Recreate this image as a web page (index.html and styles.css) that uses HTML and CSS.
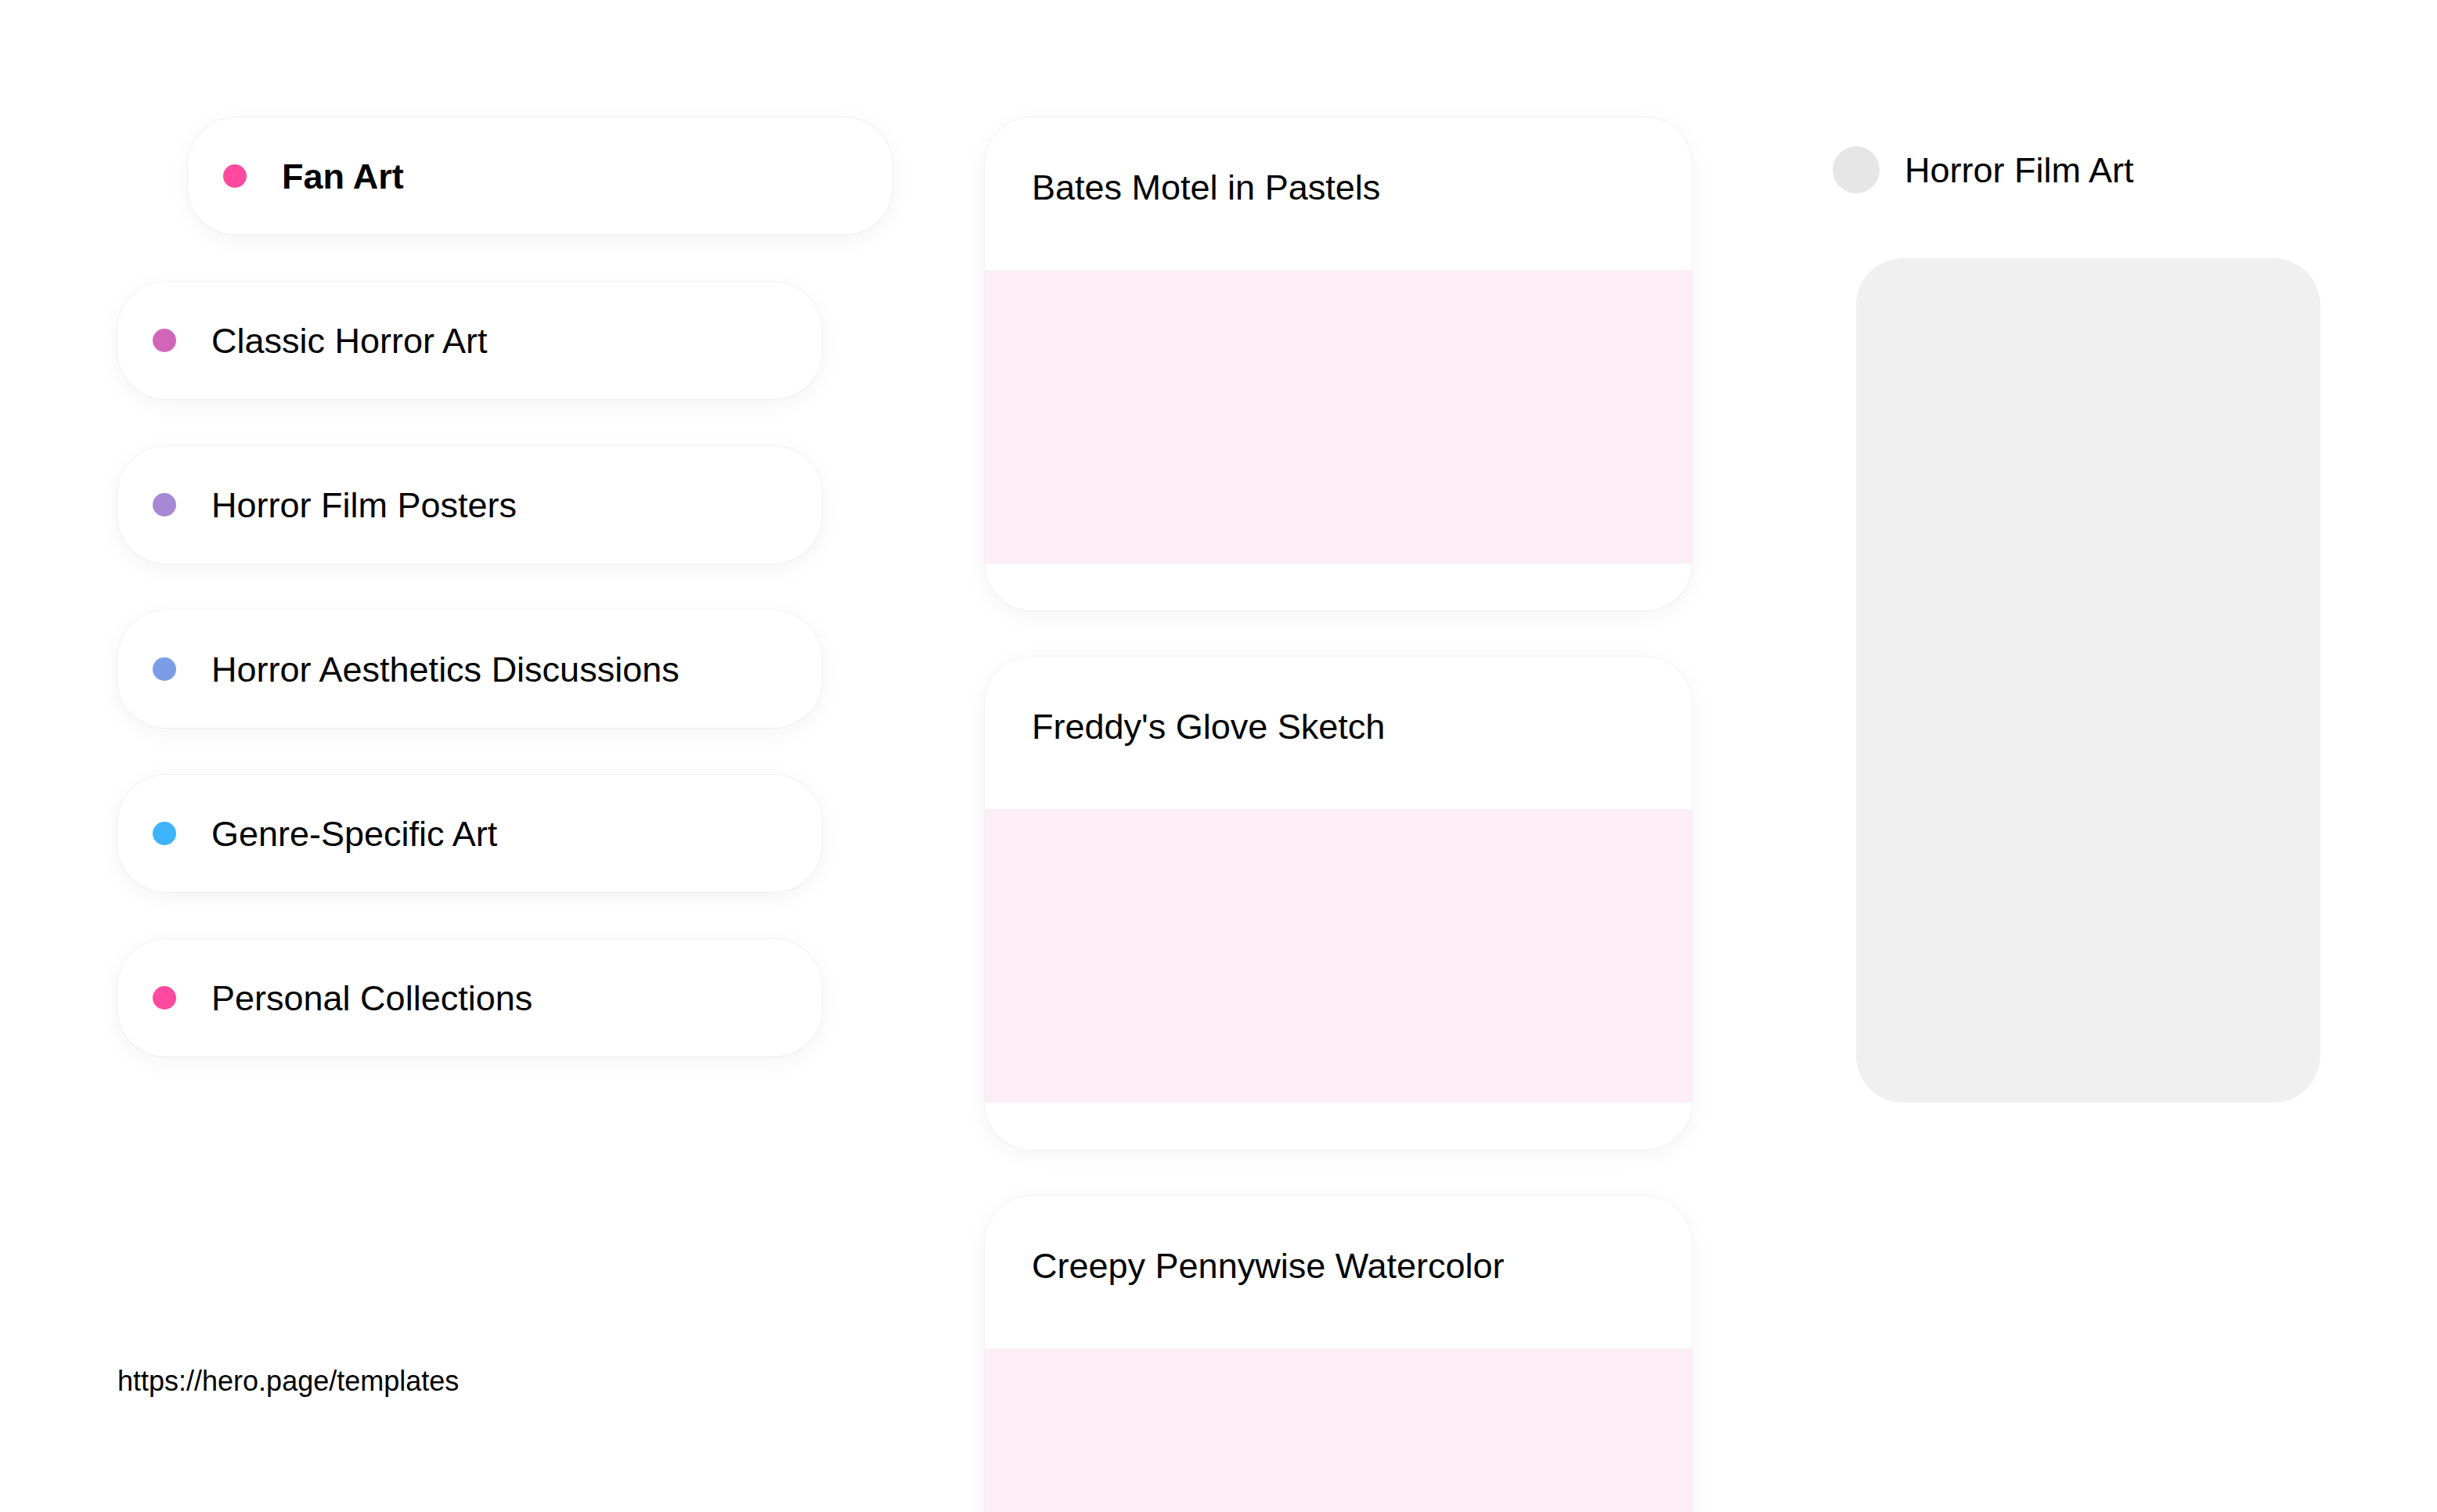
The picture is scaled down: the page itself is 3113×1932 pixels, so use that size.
FILE: index.html
```html
<!DOCTYPE html>
<html lang="en">
<head>
<meta charset="utf-8">
<title>Horror Film Art</title>
<link rel="stylesheet" href="styles.css">
</head>
<body>
<div class="app">
  <aside class="categories">
    <ul class="cat-list">
      <li class="cat active"><span class="dot dot-pink"></span><span class="cat-name">Fan Art</span></li>
      <li class="cat"><span class="dot dot-orchid"></span><span class="cat-name">Classic Horror Art</span></li>
      <li class="cat"><span class="dot dot-lavender"></span><span class="cat-name">Horror Film Posters</span></li>
      <li class="cat"><span class="dot dot-blue"></span><span class="cat-name">Horror Aesthetics Discussions</span></li>
      <li class="cat"><span class="dot dot-sky"></span><span class="cat-name">Genre-Specific Art</span></li>
      <li class="cat"><span class="dot dot-pink"></span><span class="cat-name">Personal Collections</span></li>
    </ul>
    <p class="source">https://hero.page/templates</p>
  </aside>

  <main class="feed">
    <article class="post">
      <h2 class="post-title">Bates Motel in Pastels</h2>
      <div class="post-image"></div>
    </article>
    <article class="post">
      <h2 class="post-title">Freddy's Glove Sketch</h2>
      <div class="post-image"></div>
    </article>
    <article class="post">
      <h2 class="post-title">Creepy Pennywise Watercolor</h2>
      <div class="post-image"></div>
    </article>
  </main>

  <section class="detail">
    <div class="detail-head">
      <span class="avatar"></span>
      <span class="detail-title">Horror Film Art</span>
    </div>
    <div class="detail-panel"></div>
  </section>
</div>
</body>
</html>
```

FILE: styles.css
```css
html, body {
  margin: 0;
  padding: 0;
  background: #ffffff;
}

body {
  font-family: "Liberation Sans", Arial, sans-serif;
  color: #000000;
}

.app {
  display: flex;
  align-items: flex-start;
  height: 100vh;
  overflow: hidden;
  padding: 150px 0 0 150px;
  box-sizing: border-box;
}

/* ---------- left column ---------- */
.categories {
  width: 900px;
  flex: none;
  margin-right: 208px;
}

.cat-list {
  list-style: none;
  margin: 0;
  padding: 0;
  display: flex;
  flex-direction: column;
  gap: 60px;
}

.cat {
  height: 150px;
  box-sizing: border-box;
  display: flex;
  align-items: center;
  gap: 45px;
  padding: 0 45px;
  background: #ffffff;
  border-radius: 62px;
  box-shadow: 0 0 0 1px rgba(0, 0, 0, 0.035), 0 6px 28px rgba(0, 0, 0, 0.05);
  font-size: 45px;
}

.cat.active {
  transform: translateX(90px);
  font-weight: 700;
}

.dot {
  width: 30px;
  height: 30px;
  border-radius: 50%;
  flex: none;
}

.dot-pink { background: #ff4a9f; }
.dot-orchid { background: #d166b9; }
.dot-lavender { background: #a788d5; }
.dot-blue { background: #7a9de6; }
.dot-sky { background: #3db3fa; }

.cat-name {
  line-height: 1;
}

.source {
  margin: 394px 0 0;
  font-size: 36px;
  line-height: 41px;
  color: #000000;
}

/* ---------- middle column ---------- */
.feed {
  width: 903px;
  flex: none;
  margin-right: 180px;
  display: flex;
  flex-direction: column;
  gap: 59px;
}

.post {
  background: #ffffff;
  border-radius: 60px;
  padding: 60px;
  box-shadow: 0 0 0 1px rgba(0, 0, 0, 0.035), 0 6px 28px rgba(0, 0, 0, 0.05);
  overflow: hidden;
}

.post-title {
  margin: 0 0 75px;
  font-size: 45px;
  line-height: 60px;
  font-weight: 400;
}

.post-image {
  height: 375px;
  margin: 0 -60px;
  background: #fdedf4;
}

/* ---------- right column ---------- */
.detail {
  width: 623px;
  flex: none;
  padding-top: 37px;
}

.detail-head {
  display: flex;
  align-items: center;
  gap: 32px;
  height: 60px;
}

.avatar {
  width: 60px;
  height: 60px;
  border-radius: 50%;
  background: #e6e6e6;
  flex: none;
}

.detail-title {
  font-size: 45px;
  line-height: 1;
}

.detail-panel {
  margin: 83px 0 0 30px;
  width: 593px;
  height: 1079px;
  border-radius: 60px;
  background: #f0f0f0;
}
```
